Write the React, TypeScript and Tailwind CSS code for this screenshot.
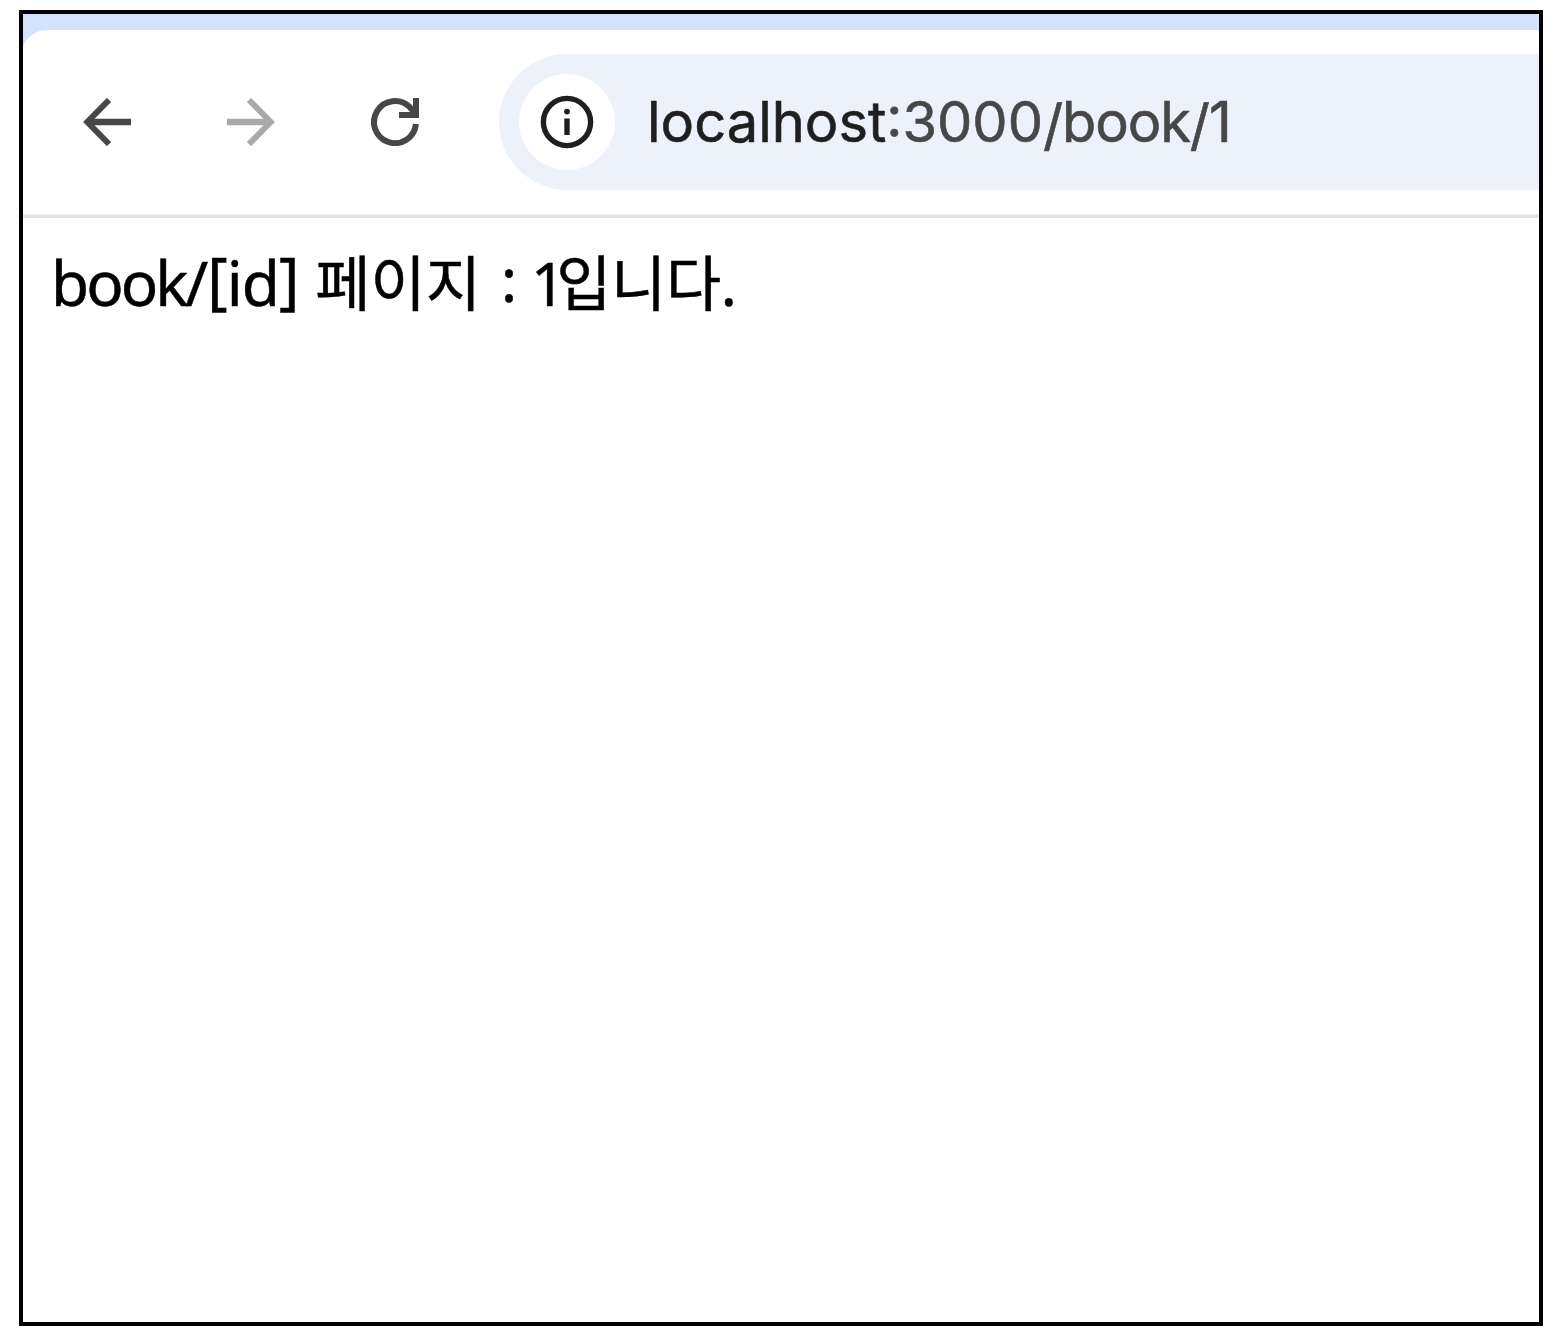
function BackIcon() {
  return (
    <svg viewBox="0 0 48 48" className="size-12 shrink-0 text-[#474747]" fill="none" stroke="currentColor" strokeWidth="6">
      <path d="M26 2 4.3 24 26 46" />
      <path d="M6 24h42" strokeWidth="6.6" />
    </svg>
  );
}

function ForwardIcon() {
  return (
    <svg viewBox="0 0 48 48" className="size-12 shrink-0 text-[#a9a9a9]" fill="none" stroke="currentColor" strokeWidth="6">
      <path d="M22 2 43.7 24 22 46" />
      <path d="M42 24H0" strokeWidth="6.6" />
    </svg>
  );
}

function ReloadIcon() {
  return (
    <svg viewBox="0 0 48 48" className="size-12 shrink-0 text-[#474747]" fill="none" stroke="currentColor" strokeWidth="6">
      <path d="M44.9 26A21 21 0 1 1 38.8 9.2L44 15" />
      <path d="M45 0v17H28" />
    </svg>
  );
}

function InfoIcon() {
  return (
    <svg viewBox="0 0 54 54" className="size-[54px]" fill="none" stroke="currentColor" strokeWidth="5.4">
      <circle cx="27" cy="27" r="23.6" />
      <path d="M27 23.5v16.5" />
      <circle cx="27" cy="16.6" r="2.9" fill="currentColor" stroke="none" />
    </svg>
  );
}

export default function App() {
  const id = '1';

  return (
    <div className="h-[1336px] w-[1560px] bg-white pt-[10px] pl-[19px]">
      <div className="flex h-[1316px] w-[1524px] flex-col overflow-hidden border-4 border-black bg-white">
        {/* Toolbar */}
        <header className="bg-[#d3e3fd] pt-4">
          <div className="-ml-0.5 flex h-[184px] items-center rounded-tl-[26px] bg-white pl-[62px]">
            <nav className="flex gap-24">
              <BackIcon />
              <ForwardIcon />
              <ReloadIcon />
            </nav>

            <div className="ml-20 flex h-[136px] flex-1 items-center rounded-l-full bg-[#ecf1fa] pl-5">
              <div className="flex size-24 items-center justify-center rounded-full bg-white text-[#1f1f1f]">
                <InfoIcon />
              </div>
              <div className="ml-8 flex items-baseline pt-0.5 font-['Inter',sans-serif] text-[56px] leading-none whitespace-nowrap text-[#474747] [-webkit-text-stroke:0.6px]">
                <span className="text-[#1f1f1f]">localhost</span>
                <span>:3000</span>
                <span className="tracking-[-1.1px]">
                  <span className="align-[-3px]">/</span>book<span className="align-[-3px]">/</span>{id}
                </span>
              </div>
            </div>
          </div>
        </header>
        <div className="h-1 shrink-0 border-t border-[#eff0ef] bg-[#e0e2e0]"></div>

        {/* Page */}
        <main className="flex items-baseline px-[28px] pt-6 font-['Noto_Sans','Noto_Sans_CJK_KR',sans-serif] text-[62px] leading-[80px] whitespace-nowrap text-black [-webkit-text-stroke:0.5px]">
          <span className="tracking-[-3px]">book/</span>
          <span className="ml-0.5 tracking-[-1px]">
            <span className="align-[4px] leading-none">[</span>id<span className="align-[4px] leading-none">]</span>
          </span>
          <span className="ml-[17px] text-[60px]">페이지</span>
          <span className="ml-5 text-[60px]">
            <span className="align-[4px] leading-none">:</span>
          </span>
          <span className="ml-[14px] text-[60px] tracking-[-0.4px]">
            <span className="tracking-[-9px]">{id}</span>입니다.
          </span>
        </main>
      </div>
    </div>
  );
}
